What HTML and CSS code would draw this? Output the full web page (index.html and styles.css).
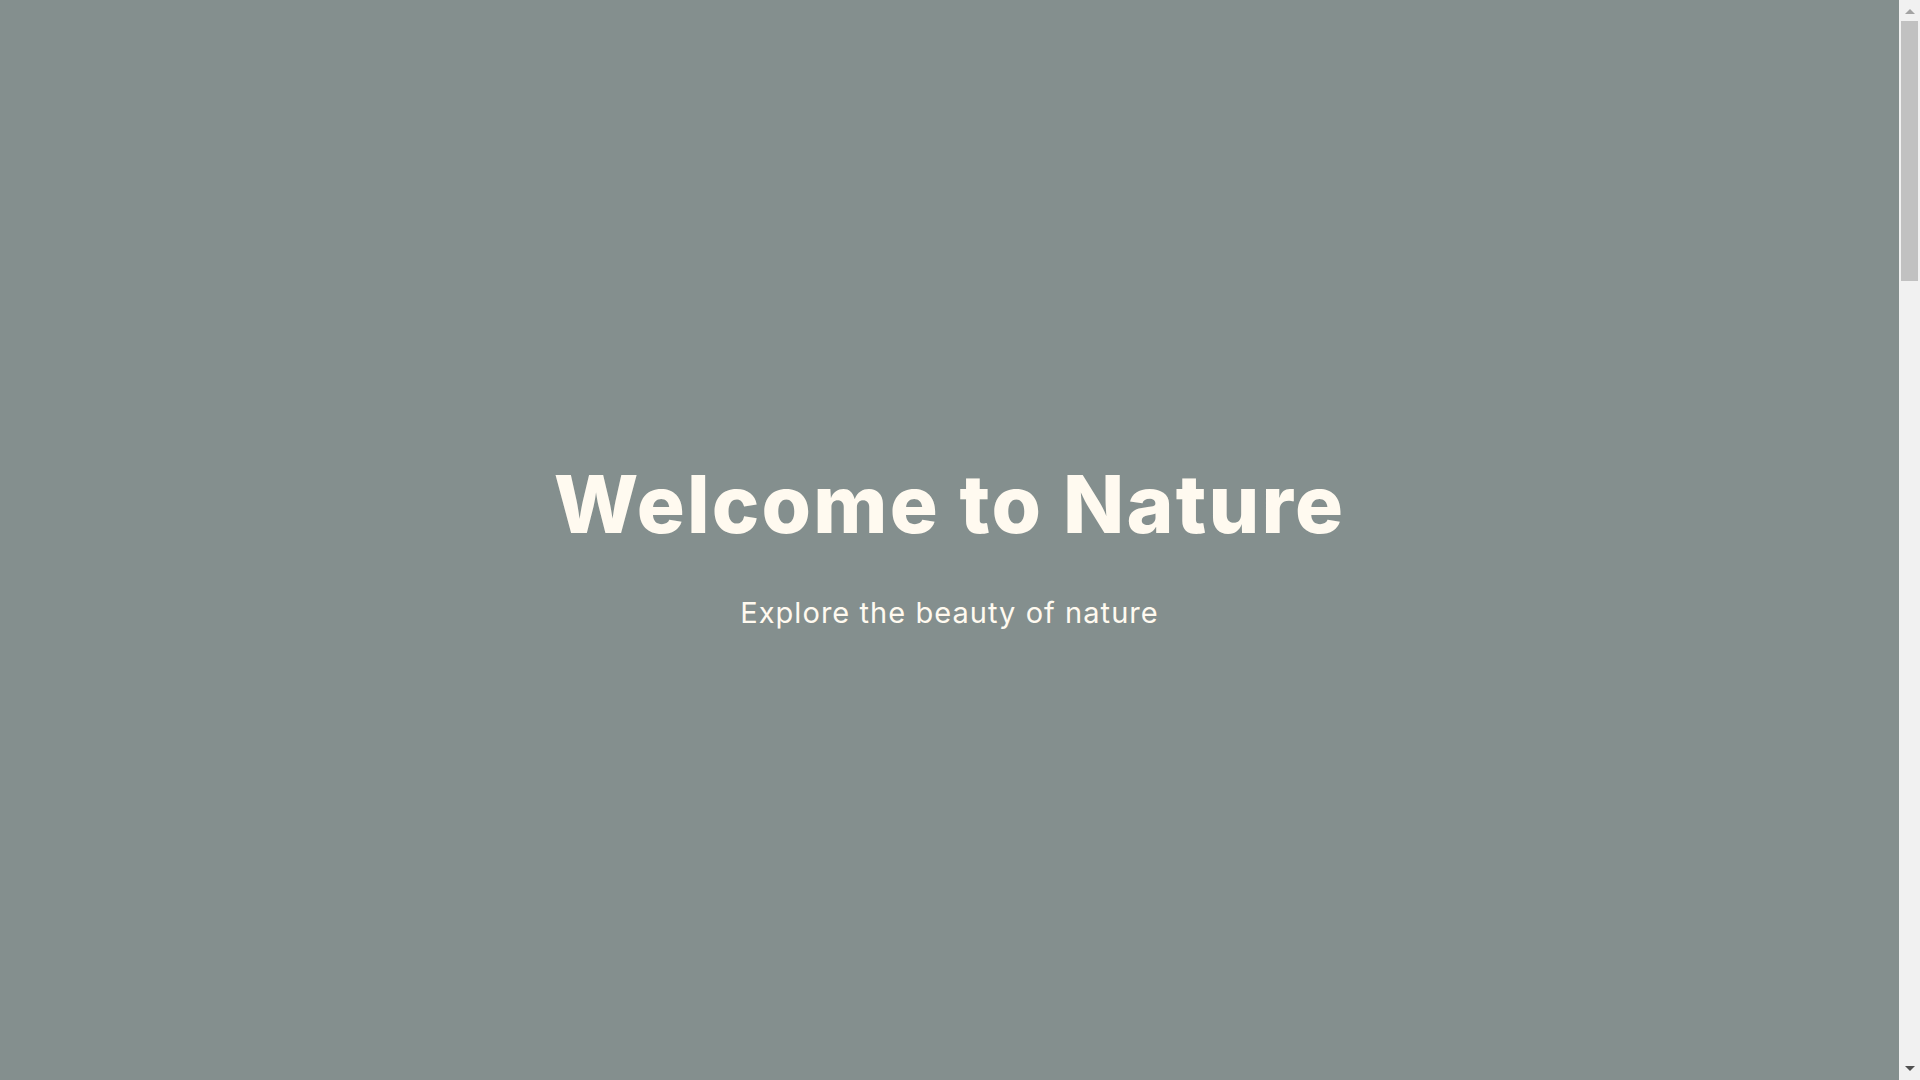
FILE: index.html
```html
<!DOCTYPE html>
<html lang="en">
<head>
<meta charset="utf-8">
<title>Welcome to Nature</title>
<link rel="stylesheet" href="styles.css">
</head>
<body>
<div class="window">
  <div class="page">
    <header class="hero">
      <div class="hero-content">
        <h1 class="hero-title">Welcome to Nature</h1>
        <p class="hero-subtitle">Explore the beauty of nature</p>
      </div>
    </header>
  </div>
  <div class="scrollbar" aria-hidden="true">
    <div class="sb-button sb-up"><span class="arrow arrow-up"></span></div>
    <div class="sb-track"><div class="sb-thumb"></div></div>
    <div class="sb-button sb-down"><span class="arrow arrow-down"></span></div>
  </div>
</div>
</body>
</html>
```
FILE: styles.css
```css
* { box-sizing: border-box; }
html, body {
  margin: 0;
  padding: 0;
  height: 100%;
  overflow: hidden;
}
body {
  background: #848f8e;
  color: #fffaf0;
  font-family: "Inter", "Open Sans", sans-serif;
}
.window {
  display: flex;
  height: 100vh;
}
.page {
  flex: 1;
  min-width: 0;
}
.hero {
  height: 100vh;
  padding-top: 11px;
  display: flex;
  align-items: center;
  justify-content: center;
  text-align: center;
}
.hero-content {
  display: flex;
  flex-direction: column;
  align-items: center;
}
.hero-title {
  margin: 0;
  font-size: 80px;
  font-weight: 800;
  line-height: 96px;
  letter-spacing: 2.2px;
}
.hero-subtitle {
  margin: 39px 0 0;
  font-size: 29px;
  font-weight: 400;
  line-height: 43.5px;
  letter-spacing: 1.05px;
}

/* scrollbar */
.scrollbar {
  width: 21px;
  flex: 0 0 21px;
  background: #f1f1f1;
  display: flex;
  flex-direction: column;
}
.sb-button {
  height: 21px;
  flex: 0 0 21px;
  display: flex;
  justify-content: center;
}
.sb-up { padding-top: 9px; }
.sb-down { padding-top: 7px; }
.arrow {
  width: 0;
  height: 0;
  border-left: 5px solid transparent;
  border-right: 5px solid transparent;
}
.arrow-up { border-bottom: 5px solid #a3a3a3; }
.arrow-down { border-top: 5px solid #505050; }
.sb-track {
  flex: 1;
  padding: 0 2px;
}
.sb-thumb {
  height: 260px;
  background: #c1c1c1;
}
```
